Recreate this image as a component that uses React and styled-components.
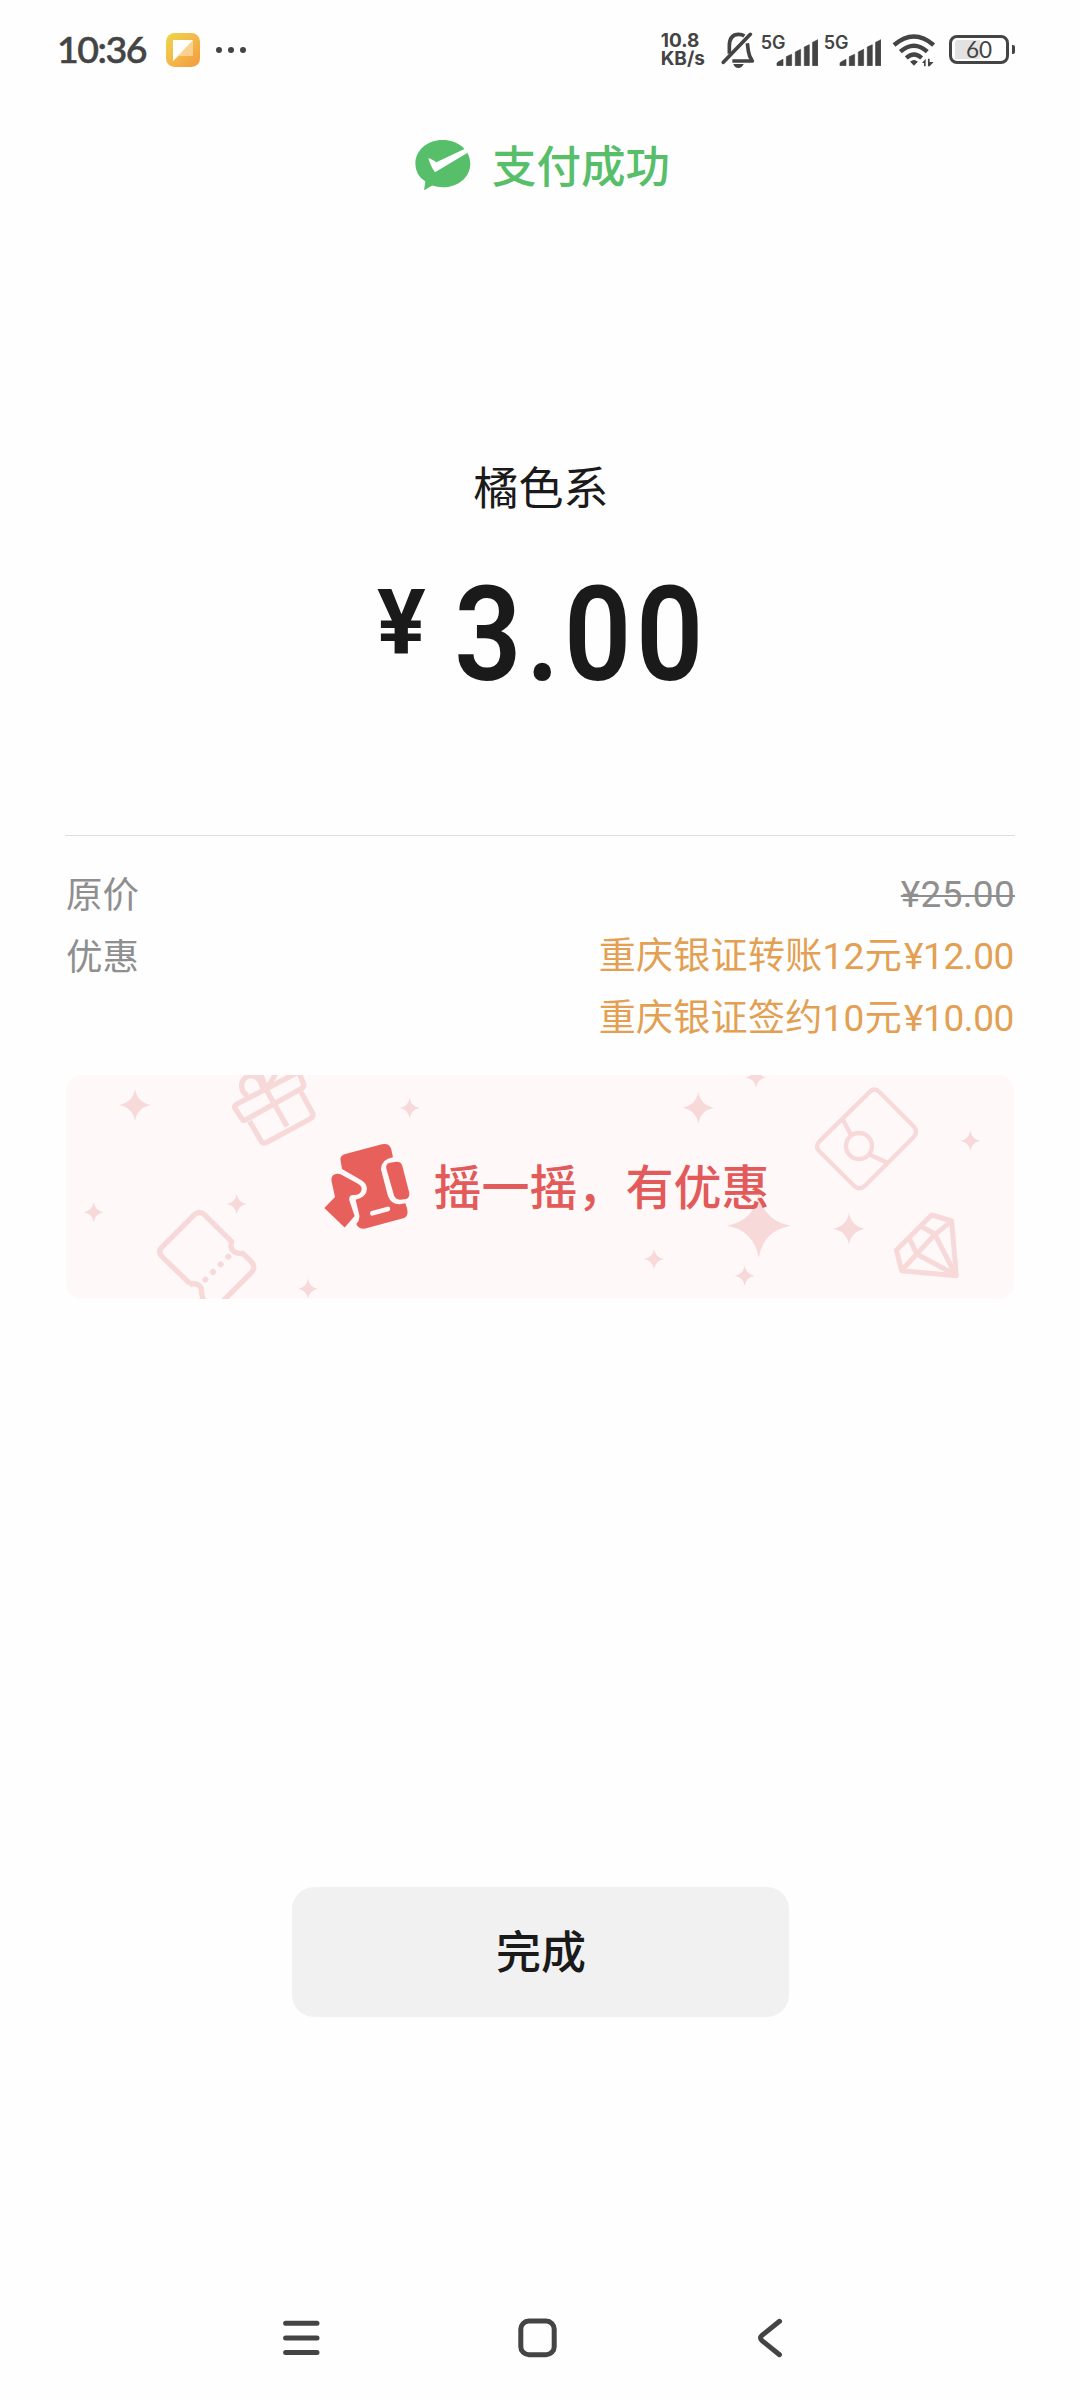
import styled, { createGlobalStyle } from 'styled-components';

const discounts = [
    { name: '重庆银证转账12元', amount: '¥12.00' },
    { name: '重庆银证签约10元', amount: '¥10.00' },
];

// x, y, radius
const stars = [
    [69, 30, 16],
    [343.7, 33, 10],
    [27.7, 137.3, 10],
    [170.7, 129, 10],
    [242, 213.7, 10],
    [632.3, 32.7, 16],
    [690, 2.3, 10.5],
    [904.3, 65.7, 10],
    [783, 153.7, 16],
    [692.7, 150.7, 32],
    [588, 184, 10],
    [678.7, 200.7, 10],
];

const Signal = () => (
    <SignalBox>
        <SignalLabel>5G</SignalLabel>
        <SignalBars viewBox="405 78 128 82">
            <path d="M408 158V151Q408 149 411 147L426 139V158ZM436 158V131L452 124V158ZM463 158V117L479 109V158ZM490 158V102L505 95V158ZM515 158V88L531 80V158Z" stroke="#444" strokeWidth="2" strokeLinejoin="round" />
        </SignalBars>
    </SignalBox>
);

const StatusBar = () => (
    <Status>
        <Clock>10:36</Clock>
        <AppIcon viewBox="0 0 34 34">
            <defs>
                <linearGradient id="note" x1="0" y1="0" x2="1" y2="1">
                    <stop offset="0" stopColor="#ead848" />
                    <stop offset="0.5" stopColor="#f4b84a" />
                    <stop offset="1" stopColor="#f29a3c" />
                </linearGradient>
            </defs>
            <rect width="34" height="34" rx="8.5" fill="url(#note)" />
            <path d="M7 7H27V23H13L7 28Z" fill="#fff" opacity="0.4" />
            <path d="M7 7H27L7 28Z" fill="#fff" />
        </AppIcon>
        <Dots viewBox="0 0 30 6">
            <circle cx="3" cy="3" r="3" />
            <circle cx="15" cy="3" r="3" />
            <circle cx="27" cy="3" r="3" />
        </Dots>
        <Speed>
            <span>10.8</span>
            <span>KB/s</span>
        </Speed>
        <Bell viewBox="237 62 102 114">
            <g fill="none" stroke="#444" strokeWidth="11">
                <path d="M244 156L325 72" strokeLinecap="round" />
                <path d="M262 130V107Q262 72 290 72Q300 72 307 77" />
                <path d="M316 99L319 122Q321 138 331 152H271" strokeLinejoin="round" />
            </g>
            <path d="M274 161H305Q300 173 289 173Q278 173 274 161Z" />
        </Bell>
        <Signal />
        <Signal />
        <Wifi viewBox="756 68 130 102">
            <g fill="none" stroke="#444" strokeWidth="13">
                <path d="M762 104Q822 53 881 104" />
                <path d="M781 124Q822 88 862 124" />
                <path d="M799 143Q822 122 845 143" />
            </g>
            <path d="M812 154Q822 147 832 154L822 165Z" stroke="#444" strokeWidth="3" strokeLinejoin="round" />
            <path d="M846 158L857 145V168H852V158ZM864 168V145H869V155H881L869 168Z" />
        </Wifi>
        <Battery>60</Battery>
    </Status>
);

const BannerArt = () => (
    <Art viewBox="0 0 948 224">
        {stars.map(([x, y, r]) => (
            <path
                key={`${x}-${y}`}
                d="M0-1Q.15-.15 1 0Q.15.15 0 1Q-.15.15-1 0Q-.15-.15 0-1Z"
                fill="#f7d9da"
                transform={`translate(${x} ${y}) scale(${r})`}
            />
        ))}
        <g transform="translate(-6 -15) scale(.33333)" fill="none" stroke="#f7d9da" strokeWidth="16" strokeLinejoin="round">
            {/* gift */}
            <path d="M569 184L602 241Q608 253 620 247L750 177Q763 170 757 158L723 96" />
            <path d="M549 181L526 147Q521 138 531 132L706 41L716 36L730 70Q734 80 724 86L560 178Q553 182 549 181Z" />
            <path d="M617 86L681 199" />
            <path d="M563 108Q540 92 546 68Q552 50 573 47Q600 48 608 86" />
            <path d="M600 38L618 84Q632 72 648 38" />
            {/* ticket */}
            <path d="M390 671L306 590Q292 576 305 562L401 466Q417 450 433 464L515 545Q508 566 524 576Q534 582 548 580L572 603Q589 619 574 638L490 722" />
            <path d="M388 674Q412 665 424 685Q423 702 431 722" />
            <path d="M436 659L505 590" strokeWidth="18" strokeLinecap="round" strokeDasharray="0.1 32.4" />
        </g>
        <g transform="translate(554 -15) scale(.33333)" fill="none" stroke="#f7d9da" strokeWidth="13" strokeLinejoin="round">
            {/* red packet */}
            <path d="M747 98Q762 80 778 96L882 200Q895 214 882 230L735 377Q718 392 703 378L598 274Q584 260 598 244Z" />
            <circle cx="717" cy="258" r="39" />
            <path d="M668 178L693 225M750 284L802 308" />
            {/* diamond */}
            <path d="M935 465L995 483L1009 647L845 632L829 571Z" strokeWidth="15" />
            <path d="M899 497L944 522L1007 645L890 582L868 535M993 485L944 524L846 630" strokeWidth="15" />
        </g>
    </Art>
);

const ShakeIcon = () => (
    <Shake viewBox="792 246 260 262">
        <path d="M841 294Q842 283 856 279L966 250Q988 245 994 265L999 289Q965 294 963 325L984 405Q995 432 1020 430L1036 427Q1042 440 1043 453Q1043 468 1030 472L916 503Q896 506 889 489Q902 475 897 458L887 416Q920 408 921 383Q920 366 902 356L846 324Z" />
        <path d="M979 322Q976 309 990 305L1009 302Q1023 301 1027 314L1048 395Q1050 410 1038 414L1021 416Q1008 417 1002 403Z" />
        <path d="M815 362Q811 342 828 339Q839 337 850 344L894 368Q909 377 904 389Q899 403 880 402Q866 402 868 418L884 465L854 500L793 441L825 408Z" />
        <path d="M937 457L984 444" stroke="#fef8f8" strokeWidth="14" strokeLinecap="round" />
    </Shake>
);

export default function App() {
    return (
        <Page>
            <GlobalStyle />
            <StatusBar />
            <Result>
                <WechatIcon viewBox="42 62 168 152">
                    <path d="M125 62C172 62 208 93 208 133S172 204 125 204Q108 204 94 199L69 213L73 187Q43 167 43 133C43 93 79 62 125 62Z" />
                    <path d="M82 117Q90 118 106 129L192 88L200 100L102 159Q90 144 82 117Z" fill="#fff" />
                </WechatIcon>
                <ResultText>支付成功</ResultText>
            </Result>
            <Merchant>橘色系</Merchant>
            <Total>
                <Currency>¥</Currency>
                <Amount>3.00</Amount>
            </Total>
            <Details>
                <Row>
                    <Label>原价</Label>
                    <OldPrice>¥25.00</OldPrice>
                </Row>
                <Row>
                    <Label>优惠</Label>
                    <div>
                        {discounts.map((item) => (
                            <Discount key={item.name}>
                                <span>{item.name}</span>
                                <Price>{item.amount}</Price>
                            </Discount>
                        ))}
                    </div>
                </Row>
            </Details>
            <Banner>
                <BannerArt />
                <ShakeIcon />
                <BannerText>摇一摇，有优惠</BannerText>
            </Banner>
            <DoneButton>完成</DoneButton>
            <NavBar>
                <NavIcon $w={38} viewBox="0 0 38 44">
                    <path d="M3.6 7.3H35M3.6 22H35M3.6 36.6H35" />
                </NavIcon>
                <NavIcon $w={40} viewBox="2 0 40 44">
                    <rect x="4.8" y="5.1" width="33.4" height="33.6" rx="8" />
                </NavIcon>
                <NavIcon $w={26} viewBox="0 0 26 44">
                    <path d="M22.5 5.3L5 19.4Q2 22 5 24.6L22.5 38.7" />
                </NavIcon>
            </NavBar>
        </Page>
    );
}

const GlobalStyle = createGlobalStyle`
    body {
        margin: 0;
        background: #fefefe;
    }
`;

const Page = styled.div`
    width: 1080px;
    height: 2400px;
    display: flex;
    flex-direction: column;
    align-items: center;
    overflow: hidden;
    background: #fefefe;
    color: #1a1a1a;
    font-family: Roboto, 'Noto Sans CJK SC', sans-serif;
`;

const Status = styled.div`
    width: 1080px;
    height: 100px;
    box-sizing: border-box;
    padding: 0 65px 0 57px;
    display: flex;
    align-items: center;
    flex-shrink: 0;
    color: #444;
    fill: #444;
    font-family: Lato, sans-serif;
`;

const Clock = styled.div`
    width: 109px;
    padding-bottom: 3px;
    font-size: 37.5px;
    font-weight: 500;
    letter-spacing: -1.5px;
    white-space: nowrap;
    -webkit-text-stroke: 0.6px #444;
`;

const AppIcon = styled.svg`
    width: 34px;
    height: 34px;
`;

const Dots = styled.svg`
    width: 30px;
    height: 6px;
    margin-left: 16px;
`;

const Speed = styled.div`
    width: 60px;
    margin-left: auto;
    display: flex;
    flex-direction: column;
    font-family: Inter, sans-serif;
    font-size: 19px;
    line-height: 18.5px;
    font-weight: 700;
`;

const Bell = styled.svg`
    width: 34px;
    height: 38px;
`;

const SignalBox = styled.div`
    width: 57px;
    height: 32px;
    margin-left: 6px;
    display: flex;
    align-items: flex-end;
`;

const SignalLabel = styled.span`
    width: 15px;
    align-self: flex-start;
    font-family: Inter, sans-serif;
    font-size: 18px;
    line-height: 18px;
    font-weight: 600;
`;

const SignalBars = styled.svg`
    width: 42.6px;
    height: 27.3px;
    flex-shrink: 0;
`;

const Wifi = styled.svg`
    width: 43.3px;
    height: 34px;
    margin-left: 11px;
`;

const Battery = styled.div`
    position: relative;
    width: 60px;
    height: 29px;
    box-sizing: border-box;
    margin: 0 6px 2px 14px;
    border: 3px solid #444;
    border-radius: 8px;
    background: linear-gradient(90deg, #e2e2e2 52%, #fefefe 52%) content-box;
    padding: 1.5px 3px;
    font-size: 22.5px;
    line-height: 21px;
    text-align: center;

    &::after {
        content: '';
        position: absolute;
        right: -9px;
        top: 7px;
        width: 3.5px;
        height: 9px;
        border-radius: 0 2px 2px 0;
        background: #444;
    }
`;

const Result = styled.div`
    height: 130px;
    display: flex;
    align-items: center;
    gap: 21px;
    margin-left: 5px;
`;

const ResultText = styled.span`
    padding-bottom: 4px;
    font-size: 44.5px;
    font-weight: 500;
    color: #57be6a;
`;

const WechatIcon = styled.svg`
    width: 56px;
    height: 50.6px;
    fill: #57be6a;
`;

const Merchant = styled.div`
    margin: 230px 0 0 2px;
    font-size: 45px;
    line-height: 60px;
`;

const Total = styled.div`
    width: 326px;
    height: 130px;
    margin-top: 50px;
    display: flex;
    align-items: flex-start;
    justify-content: space-between;
`;

const Currency = styled.span`
    font-size: 91px;
    line-height: 106px;
    font-weight: 700;
`;

/* digits are slightly condensed */
const Amount = styled.span`
    font-size: 131px;
    line-height: 130px;
    font-weight: 600;
    letter-spacing: 5px;
    margin-right: -5px;
    transform: scaleX(0.9);
    transform-origin: right;
`;

const Details = styled.div`
    width: 950px;
    margin-top: 135px;
    box-sizing: border-box;
    border-top: 1px solid #dedede;
    padding: 28px 0 0 1px;
`;

const Row = styled.div`
    display: flex;
    justify-content: space-between;
    font-size: 37px;
    line-height: 62px;
`;

const Label = styled.span`
    font-size: 36.5px;
    line-height: 64px;
    height: 62px;
    color: #8f8f8f;
`;

const OldPrice = styled.span`
    color: #8f8f8f;
    letter-spacing: 0.3px;
    text-decoration: line-through;
    text-decoration-thickness: 2px;
`;

const Discount = styled.div`
    height: 62px;
    padding-right: 1px;
    display: flex;
    justify-content: flex-end;
    gap: 2px;
    color: #e39f52;
    letter-spacing: 0.3px;
`;

const Price = styled.span`
    letter-spacing: -0.4px;
`;

const Banner = styled.div`
    position: relative;
    width: 948px;
    height: 224px;
    margin-top: 25px;
    display: flex;
    align-items: center;
    flex-shrink: 0;
    border-radius: 16px;
    overflow: hidden;
    background: #fef8f8;
`;

const Art = styled.svg`
    position: absolute;
    inset: 0;
    width: 948px;
    height: 224px;
`;

const Shake = styled.svg`
    position: relative;
    width: 86.6px;
    height: 87.3px;
    margin-left: 258px;
    fill: #e8605c;
`;

const BannerText = styled.span`
    position: relative;
    margin-left: 23px;
    padding-bottom: 6px;
    font-size: 48px;
    font-weight: 500;
    color: #e25a5a;
`;

const DoneButton = styled.button`
    width: 497px;
    height: 130px;
    margin-top: 588px;
    padding: 0 0 6px 2px;
    flex-shrink: 0;
    border: none;
    border-radius: 22px;
    background: #f1f1f1;
    color: #1a1a1a;
    font-family: inherit;
    font-size: 45px;
    font-weight: 500;
`;

const NavBar = styled.div`
    width: 501px;
    margin: 299px 0 0 -16px;
    display: flex;
    justify-content: space-between;
`;

const NavIcon = styled.svg`
    width: ${(props) => props.$w}px;
    height: 44px;
    fill: none;
    stroke: #444;
    stroke-width: 5;
    stroke-linecap: round;
`;
